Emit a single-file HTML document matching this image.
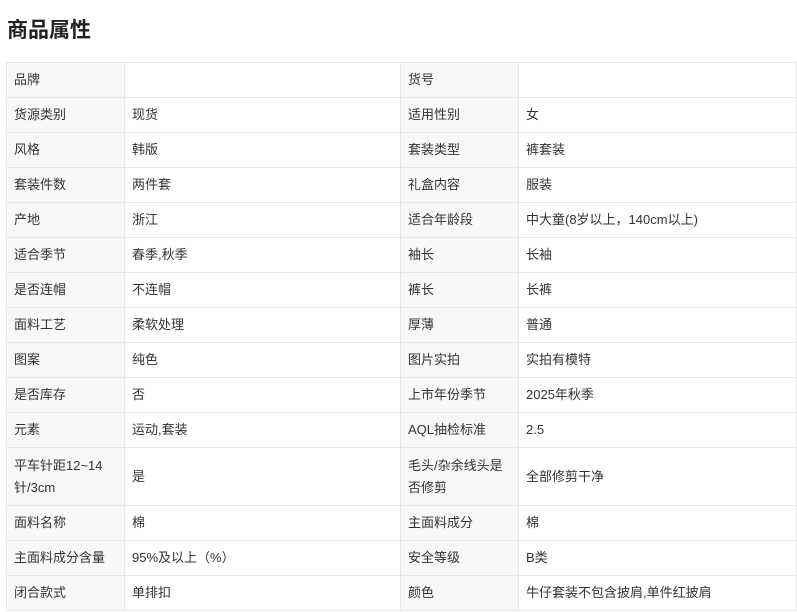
<!DOCTYPE html>
<html><head><meta charset="utf-8"><style>
body{margin:0;background:#fff;font-family:"Liberation Sans","Noto Sans CJK SC",sans-serif;color:#333;}
h2{position:absolute;left:7px;top:15px;margin:0;font-size:21px;font-weight:bold;color:#222;line-height:32px}
table{position:absolute;left:6px;top:62px;border-collapse:collapse;width:790px;font-size:13px;table-layout:fixed}
td{border:1px solid #e8e8e8;height:35px;box-sizing:border-box;padding:0 7px;line-height:22px}
td.l{background:#f8f8f8}
</style></head><body>
<h2>商品属性</h2>
<table>
<colgroup><col style="width:118px"><col style="width:276px"><col style="width:118px"><col style="width:278px"></colgroup>
<tr><td class="l">品牌</td><td></td><td class="l">货号</td><td></td></tr>
<tr><td class="l">货源类别</td><td>现货</td><td class="l">适用性别</td><td>女</td></tr>
<tr><td class="l">风格</td><td>韩版</td><td class="l">套装类型</td><td>裤套装</td></tr>
<tr><td class="l">套装件数</td><td>两件套</td><td class="l">礼盒内容</td><td>服装</td></tr>
<tr><td class="l">产地</td><td>浙江</td><td class="l">适合年龄段</td><td>中大童(8岁以上，140cm以上)</td></tr>
<tr><td class="l">适合季节</td><td>春季,秋季</td><td class="l">袖长</td><td>长袖</td></tr>
<tr><td class="l">是否连帽</td><td>不连帽</td><td class="l">裤长</td><td>长裤</td></tr>
<tr><td class="l">面料工艺</td><td>柔软处理</td><td class="l">厚薄</td><td>普通</td></tr>
<tr><td class="l">图案</td><td>纯色</td><td class="l">图片实拍</td><td>实拍有模特</td></tr>
<tr><td class="l">是否库存</td><td>否</td><td class="l">上市年份季节</td><td>2025年秋季</td></tr>
<tr><td class="l">元素</td><td>运动,套装</td><td class="l">AQL抽检标准</td><td>2.5</td></tr>
<tr><td class="l" style="height:58px">平车针距12~14针/3cm</td><td>是</td><td class="l">毛头/杂余线头是否修剪</td><td>全部修剪干净</td></tr>
<tr><td class="l">面料名称</td><td>棉</td><td class="l">主面料成分</td><td>棉</td></tr>
<tr><td class="l">主面料成分含量</td><td>95%及以上（%）</td><td class="l">安全等级</td><td>B类</td></tr>
<tr><td class="l">闭合款式</td><td>单排扣</td><td class="l">颜色</td><td>牛仔套装不包含披肩,单件红披肩</td></tr>
</table>
</body></html>
